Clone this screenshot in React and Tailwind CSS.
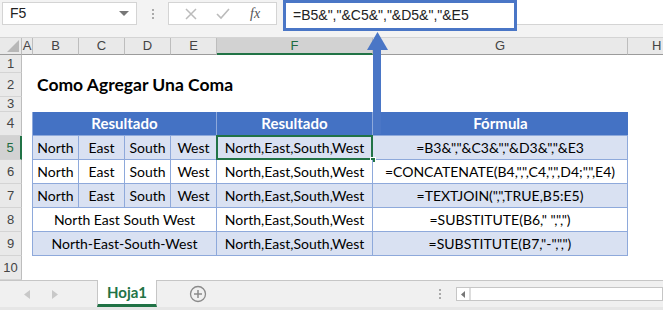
import React from "react";

const cols = ["A", "B", "C", "D", "E", "F", "G", "H"];
const widths = ["w-[11px]", "w-[46px]", "w-[46px]", "w-[46px]", "w-[46px]", "w-[156px]", "w-[255px]", "w-[60px]"];

const bd = "border-r border-b border-[#8ea9db]";
const cellFont = { fontFamily: "Lato, 'Open Sans', sans-serif" };

function RowHead({ n, active }) {
  return (
    <div
      className={`w-[22px] shrink-0 flex items-center justify-center text-[13px] border-b border-[#d4d4d4] ${
        active
          ? "bg-[#d2d2d2] text-[#1e6b40] border-r-2 border-r-[#217346]"
          : "bg-[#e9e9e9] text-[#444] border-r border-r-[#bdbdbd]"
      }`}
    >
      {n}
    </div>
  );
}

function Cell({ w, children, fill, extra = "" }) {
  return (
    <div
      className={`${w} shrink-0 flex items-center justify-center text-[14px] text-black ${bd} ${
        fill ? "bg-[#d9e1f2]" : "bg-white"
      } ${extra}`}
      style={cellFont}
    >
      {children}
    </div>
  );
}

function DataRow({ n, fill, merged, words, formula, active }) {
  return (
    <div className="flex h-[24px]">
      <RowHead n={n} active={active} />
      <div className="w-[11px] shrink-0 border-r border-[#8ea9db]" />
      {merged ? (
        <Cell w="w-[184px]" fill={fill}>{merged}</Cell>
      ) : (
        words.map((wd, i) => (
          <Cell key={i} w="w-[46px]" fill={fill}>{wd}</Cell>
        ))
      )}
      <Cell w="w-[156px]" fill={fill} extra="relative">
        North,East,South,West
        {active && (
          <>
            <div className="absolute inset-[-1px] border-2 border-[#217346]" />
            <div className="absolute right-[-4px] bottom-[-4px] w-[6px] h-[6px] bg-[#217346] border border-white" />
          </>
        )}
      </Cell>
      <Cell w="w-[255px]" fill={fill}>{formula}</Cell>
    </div>
  );
}

export default function App() {
  const dirs = ["North", "East", "South", "West"];
  return (
    <div
      className="relative w-[663px] h-[310px] overflow-hidden bg-white"
      style={{ fontFamily: "'Liberation Sans', Arial, sans-serif" }}
    >
      {/* Formula bar */}
      <div className="h-[38px] bg-[#f3f3f3] flex items-start pt-[2px] border-b border-[#d4d4d4]">
        <div className="ml-[2px] w-[135px] h-[23px] bg-white border border-[#d4d4d4] flex items-center justify-between px-[7px] text-[14px] text-[#222]">
          F5
          <svg width="10" height="6" viewBox="0 0 10 6"><path d="M0 0h10L5 5z" fill="#777" /></svg>
        </div>
        <div className="w-[31px] h-[23px] flex flex-col items-center justify-center gap-[2px]">
          <span className="w-[2px] h-[2px] bg-[#aaa]" />
          <span className="w-[2px] h-[2px] bg-[#aaa]" />
          <span className="w-[2px] h-[2px] bg-[#aaa]" />
        </div>
        <div className="w-[109px] h-[23px] bg-white border border-[#d4d4d4] flex items-center justify-around px-[6px]">
          <svg width="12" height="12" viewBox="0 0 12 12"><path d="M1 1l10 10M11 1L1 11" stroke="#bbb" strokeWidth="1.5" /></svg>
          <svg width="14" height="12" viewBox="0 0 14 12"><path d="M1 6l4 4 8-9" stroke="#bbb" strokeWidth="1.6" fill="none" /></svg>
          <span className="italic text-[14px] text-[#555]" style={{ fontFamily: "'Liberation Serif', serif" }}>fx</span>
        </div>
        <div className="ml-[6px] w-[234px] h-[31px] mt-[-2px] bg-white border-[3px] border-[#4a76c6] flex items-center pl-[7px] text-[14px] text-[#222]">
          =B5&amp;","&amp;C5&amp;","&amp;D5&amp;","&amp;E5
        </div>
        <div className="flex-1 h-[25px] mt-[-2px] bg-white border-b border-[#d4d4d4]" />
      </div>

      {/* Column headers */}
      <div className="flex h-[17px] bg-[#e9e9e9]">
        <div className="w-[22px] shrink-0 relative border-r border-[#bdbdbd] border-b border-b-[#9b9b9b]">
          <svg className="absolute right-[2px] bottom-[2px]" width="12" height="12" viewBox="0 0 12 12"><path d="M12 0v12H0z" fill="#b7b7b7" /></svg>
        </div>
        {cols.map((c, i) => (
          <div
            key={c}
            className={`${widths[i]} shrink-0 flex items-center text-[13px] ${
              c === "F"
                ? "bg-[#d2d2d2] text-[#1e6b40] border-b-2 border-[#217346] border-r border-r-[#bdbdbd]"
                : "text-[#444] border-r border-[#bdbdbd] border-b border-b-[#9b9b9b]"
            } ${c === "H" ? "justify-start pl-[24px]" : "justify-center"}`}
          >
            {c}
          </div>
        ))}
      </div>

      {/* Rows 1-3 */}
      <div className="flex h-[18px]"><RowHead n={1} /></div>
      <div className="flex h-[24px]">
        <RowHead n={2} />
        <div className="pl-[15px] flex items-center text-[17.5px] font-bold text-black" style={cellFont}>Como Agregar Una Coma</div>
      </div>
      <div className="flex h-[15px]"><RowHead n={3} /></div>

      {/* Header row 4 */}
      <div className="flex h-[24px]" style={cellFont}>
        <RowHead n={4} />
        <div className="w-[11px] shrink-0 border-r border-[#8ea9db]" />
        <div className="w-[184px] shrink-0 bg-[#4472c4] text-white font-bold text-[15px] flex items-center justify-center border-r border-[#8ea9db] border-b border-b-[#8ea9db]">Resultado</div>
        <div className="w-[156px] shrink-0 bg-[#4472c4] text-white font-bold text-[15px] flex items-center justify-center border-r border-[#8ea9db] border-b border-b-[#8ea9db]">Resultado</div>
        <div className="w-[255px] shrink-0 bg-[#4472c4] text-white font-bold text-[15px] flex items-center justify-center border-b border-[#8ea9db]">Fórmula</div>
      </div>

      <DataRow n={5} fill active words={dirs} formula={'=B3&","&C3&","&D3&","&E3'} />
      <DataRow n={6} words={dirs} formula={'=CONCATENATE(B4,",",C4,",",D4;",",E4)'} />
      <DataRow n={7} fill words={dirs} formula={'=TEXTJOIN(",",TRUE,B5:E5)'} />
      <DataRow n={8} merged="North East South West" formula={'=SUBSTITUTE(B6," ",",")'} />
      <DataRow n={9} fill merged="North-East-South-West" formula={'=SUBSTITUTE(B7,"-",",")'} />
      <div className="flex h-[24px]"><RowHead n={10} /></div>

      {/* Sheet tabs */}
      <div className="flex h-[27px] bg-[#f0f0f0] border-t border-[#c6c6c6]">
        <div className="w-[97px] flex items-center pl-[24px] gap-[22px]">
          <svg width="6" height="9" viewBox="0 0 6 9"><path d="M6 0v9L0 4.5z" fill="#c8c8c8" /></svg>
          <svg width="6" height="9" viewBox="0 0 6 9"><path d="M0 0v9l6-4.5z" fill="#c8c8c8" /></svg>
        </div>
        <div className="w-[60px] mt-[-1px] bg-white border-x border-[#c6c6c6] border-b-[3px] border-b-[#217346] flex items-center justify-center text-[15px] font-bold text-[#217346]" style={cellFont}>Hoja1</div>
        <div className="w-[82px] flex items-center justify-center">
          <svg width="18" height="18" viewBox="0 0 18 18"><circle cx="9" cy="9" r="7.5" fill="none" stroke="#8a8a8a" strokeWidth="1.3" /><path d="M9 5v8M5 9h8" stroke="#8a8a8a" strokeWidth="1.5" /></svg>
        </div>
        <div className="flex-1 flex items-center">
          <div className="ml-[200px] flex flex-col gap-[2px]">
            <span className="w-[2px] h-[2px] bg-[#aaa]" />
            <span className="w-[2px] h-[2px] bg-[#aaa]" />
            <span className="w-[2px] h-[2px] bg-[#aaa]" />
          </div>
          <div className="ml-[15px] flex-1 h-[14px] bg-white border border-[#c6c6c6] flex">
            <div className="w-[14px] border-r-2 border-[#ddd] flex items-center justify-center">
              <svg width="4" height="7" viewBox="0 0 4 7"><path d="M4 0v7L0 3.5z" fill="#777" /></svg>
            </div>
          </div>
        </div>
      </div>
      <div className="h-[3px] bg-[#e6e6e6]" />

      {/* Arrow overlay */}
      <div className="absolute left-[373px] top-[48px] w-[8px] h-[86px] bg-[#4a76c6]" />
      <svg className="absolute left-[367px] top-[32px]" width="21" height="18" viewBox="0 0 21 18"><path d="M10.5 0L21 18H0z" fill="#4a76c6" /></svg>
    </div>
  );
}
